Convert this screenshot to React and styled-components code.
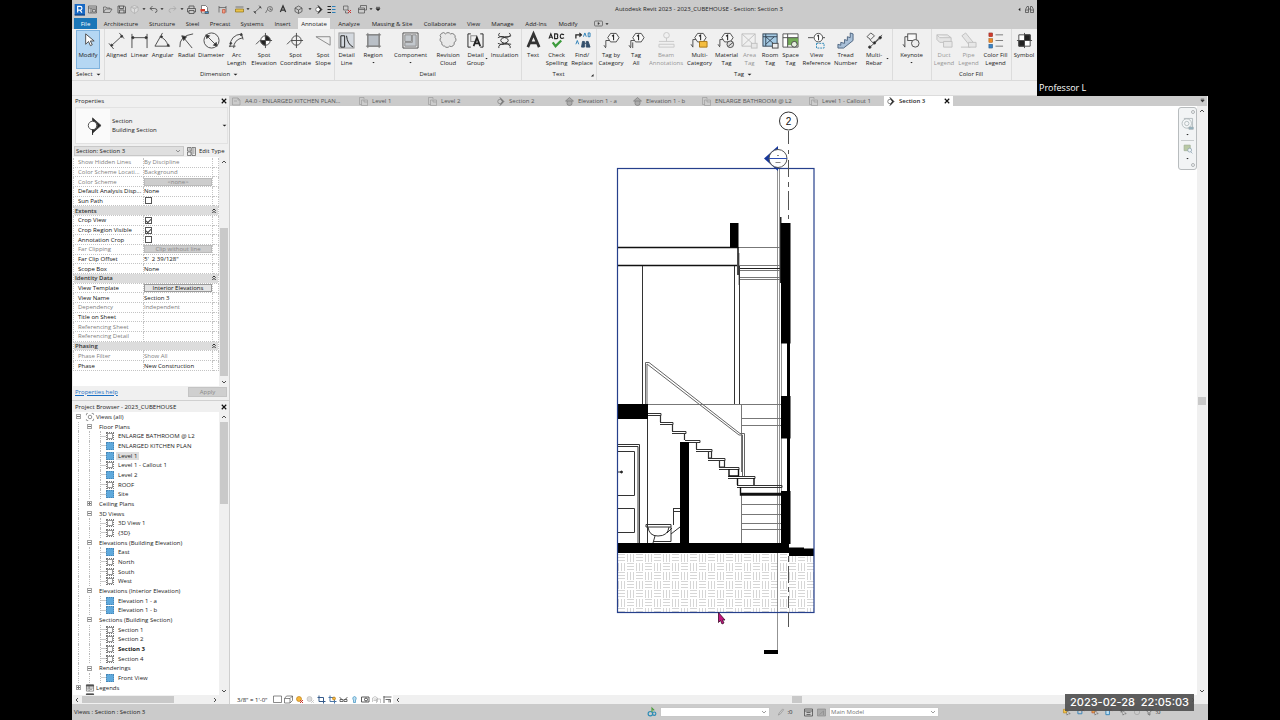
import React from "react";
import styled, { createGlobalStyle, css } from "styled-components";

const Global = createGlobalStyle`
  * { box-sizing: border-box; }
  body { margin: 0; background: #000; }
  button, input, select { font: inherit; color: inherit; margin: 0; padding: 0; border: 0; background: none; border-radius: 0; }
  body, button, input, select { font-family: "Open Sans", "Noto Sans", sans-serif; }
`;

/* ---------- icons ---------- */
const G = "#4a4a4a";
const one = (x, y) => (
  <g>
    <path d={`M${x - 3} ${y - 4.5}h6l3 4.5l-3 4.5h-6l-3 -4.5z`} fill="#f8f8f8" />
    <path d={`M${x - 1.5} ${y - 1.5}l1.7 -1.3v5.6`} stroke="#222" strokeWidth="1.1" />
  </g>
);
const icons = {
  modify: <path d="M6 2v11l3-3l2 4.500l2-1l-2-4h4z" fill="#fff" />,
  aligned: <g><path d="M3 15L15 4M1 12l5 6M12 1l5 6" /><circle cx="4" cy="14" r="1.100" fill="#222" /><circle cx="14.500" cy="4.500" r="1.100" fill="#222" /></g>,
  linear: <g><path d="M1 2v15M17 2v15M1 6h16" /><circle cx="2" cy="6" r="1.200" fill="#222" /><circle cx="16" cy="6" r="1.200" fill="#222" /></g>,
  angular: <g><path d="M9 1L1 15h16M6 5q7 2 9 10" /><circle cx="8" cy="5" r="1" fill="#222" /><circle cx="15" cy="14" r="1" fill="#222" /></g>,
  radial: <g><path d="M2 16Q1 4 16 2M6 6l9 11" /><path d="M4 4l5 1l-3 4z" fill="#222" /></g>,
  diameter: <g><circle cx="9" cy="9" r="8" /><path d="M4 4l10 10" /><path d="M3 3l4 1l-3 3zM15 15l-4-1l3-3z" fill="#222" /></g>,
  arc: <g><path d="M2 16Q2 3 15 2M6 17q0-9 10-11M1 15h7M14 1l2 7" /><circle cx="3" cy="12" r="1" fill="#222" /><circle cx="14" cy="3" r="1" fill="#222" /></g>,
  spotElev: <g><circle cx="10" cy="9" r="5" fill="#fff" /><path d="M10 4a5 5 0 0 1 5 5h-5zM10 14a5 5 0 0 1-5-5h5z" fill="#222" /><path d="M0 13l4-4h13M10 1v16" /></g>,
  spotCoord: <g><circle cx="10" cy="9" r="5" /><path d="M0 13l4-4h13M10 1v16" /></g>,
  slope: <path d="M1 5h15v9z" stroke="#888" />,
  detailLine: <g><rect x="1" y="1" width="16" height="16" fill="#d4d9df" stroke="#999" /><path d="M3 4h4v12H3zM9 4q1 9 7 12" stroke="#222" /></g>,
  region: <g><rect x="3" y="3" width="12" height="12" fill="#b9bfc6" stroke="#888" /><path d="M3 1v16M15 1v16M1 3h16M1 15h16" stroke="#777" /></g>,
  component: <g><path d="M1 1h16v16H1z" fill="#f2f2f2" /><path d="M3 3h7v7H3zM11 3h4v12H3v-4h8z" fill="#c3c8cd" stroke="#888" /></g>,
  cloud: <path d="M6 2a3 3 0 0 1 5 0a3.500 3.500 0 0 1 5 4a3 3 0 0 1-1 5a3.500 3.500 0 0 1-5 4a3 3 0 0 1-5 0a3 3 0 0 1-3-4a3 3 0 0 1-1-5a3 3 0 0 1 5-4z" fill="#e8e8e8" stroke="#777" />,
  group: <g><path d="M4 2H1v14h3M14 2h3v14h-3" stroke="#222" /><rect x="4" y="4" width="6" height="6" stroke="#888" /><path d="M7 15l3.500-9l3.500 9M8 12h5" stroke="#222" strokeWidth="1.800" /></g>,
  insulation: <g stroke="#333"><path d="M4 1q-3 3 1 4q8 1 8 4q0 2-4 3q-7 1-6 5" /><path d="M14 1q3 3-1 4q-8 1-8 4q0 2 4 3q7 1 6 5" /><path d="M2 6q3-2 7-1t7-1M2 12q4 2 7 1t7 0" /></g>,
  textA: <path d="M3 16L9 2l6 14M5 11.500h8" stroke="#333" strokeWidth="2.800" />,
  check: <g><path d="M1 7l2-5l2 5M2 5.500h2M7 2v5h2q2 0 1-2.500q1-2.500-1-2.500zM17 3q-4-2-4 1.500t4 1.500" stroke="#222" strokeWidth="1.200" /><path d="M5 11l3 4l6-6" stroke="#3c9b3c" strokeWidth="2.400" /></g>,
  find: <g><path d="M2 7V3h5" stroke="#222" strokeWidth="1.300" /><path d="M6 1l2.500 2l-2.500 2z" fill="#222" /><path d="M10 5l1.500-4l1.500 4M15 1v4h2V1zM2 13l1.500-4l1.500 4" stroke="#2a7fb8" /><path d="M8 16l1-6h2v6zM13 16v-6h2l2 6zM11 12h2" fill="#35506b" stroke="#35506b" /></g>,
  tagCat: <g><path d="M3 16V9h5M1 14l2 3" />{one(11, 6)}</g>,
  tagAll: <g><path d="M3 16V9h5M5 17V11M1 14l2 3" />{one(11, 6)}</g>,
  beam: <g stroke="#999"><path d="M1 10h16M1 13h16v3H1z" /><circle cx="9" cy="3.500" r="3" /><path d="M9 6v4" /></g>,
  multiCat: <g><path d="M2 16V8h5M0 13l2 3" />{one(10, 6)}<path d="M9 10h8v6H9z" fill="#f4bd3f" stroke="#a97612" /></g>,
  material: <g><path d="M2 15V8h5M0 13l2 3" />{one(10, 6)}<circle cx="13" cy="13" r="3.500" fill="#ddd" /><path d="M11 15l5-4" /></g>,
  area: <g stroke="#888"><path d="M1 2h14v13H1zM1 2l14 13M15 2L1 15" /><rect x="11" y="12" width="6" height="5" fill="#ddd" /></g>,
  room: <g><rect x="1" y="2" width="15" height="13" fill="#a6cbe4" stroke="#345" /><path d="M1 5h15M4 5l9 8M13 5l-9 8M4 2v13" stroke="#345" /><rect x="11" y="12" width="6" height="5" fill="#eee" /></g>,
  space: <g><path d="M1 2h16v14H1z" fill="#fff" stroke="#555" /><path d="M6 6h11v8H6z" fill="#74ac58" stroke="none" /><path d="M1 6h16M6 2v14" /><circle cx="13" cy="13" r="3" fill="#e6f0e0" /></g>,
  viewRef: <g><path d="M0 6h6M15 6h3" /><circle cx="11" cy="6" r="4.500" fill="#fff" /><path d="M9.500 4.500l1.700-1.300v5.600" stroke="#222" /><path d="M9 12h8v5H9z" stroke="#2d88b9" strokeDasharray="2 1" /></g>,
  tread: <path d="M1 13v4h6l10-8V2l-3-1v5l-3-1v4l-3-1v4l-4-1v3z" fill="#a9c0d8" stroke="#4c6480" />,
  rebar: <g><path d="M1 5l4-4l4 3l-4 4zM4 8l4 4l9-9M4 16l13-11" stroke="#555" /><circle cx="4" cy="16" r="1.300" fill="#222" /><circle cx="9" cy="11.500" r="1.300" fill="#222" /><circle cx="15" cy="6" r="1.300" fill="#222" /></g>,
  keynote: <g><path d="M2 16V5h5M0 13l2 3" /><rect x="5" y="2" width="9" height="7" fill="#fafafa" /><circle cx="13" cy="12" r="4" fill="#eee" /></g>,
  duct: <g stroke="#888"><path d="M1 3h11l4 3v5H4l-3-3zM1 3l3 3h12" fill="#d8d8d8" /><path d="M8 10h9v6H8z" fill="#ddd" /></g>,
  pipe: <g stroke="#888"><path d="M2 4l4-3l8 10l-4 3zM1 16h10" fill="#d8d8d8" /><path d="M9 11h8v5H9z" fill="#ddd" /></g>,
  colorFill: <g><rect x="2" y="1" width="4" height="4" fill="#cf3b2d" stroke="#8a2a20" strokeWidth=".5" /><rect x="2" y="7" width="4" height="4" fill="#ef8a26" stroke="#955010" strokeWidth=".5" /><rect x="2" y="13" width="4" height="4" fill="#3a82c4" stroke="#25527c" strokeWidth=".5" /><path d="M9 3h8M9 9h8M9 15h8" stroke="#777" /></g>,
  symbol: <g><path d="M3 3h12v12H3z" fill="#fff" /><path d="M9 3h6v6H9zM3 9h6v6H3z" fill="#222" /><path d="M9 1v16M1 9h16" /></g>,

  revit: <g><rect x="1" y="0" width="17" height="18" fill="#1768c4" stroke="none" /><path d="M6 14V4h4q3 0 3 3t-3 3H6M10 10l3 4" stroke="#fff" strokeWidth="2" /><path d="M1 18h17" stroke="#0b3f80" strokeWidth="2" /></g>,
  home: <path d="M1 2h16v14H1zM1 6h16M6 6v10M9 9h6v5H9z" />,
  open: <path d="M1 15V4h5l2 2h6v2M1 15l4-7h13l-4 7z" />,
  save: <path d="M2 2h13l2 2v12H2zM5 2v5h8V2M5 16v-6h9v6" strokeWidth="1.600" />,
  sync: <path d="M9 1l7 3v8l-7 5l-7-5V4zM2 4l7 4l7-4M9 8v9" stroke="#aaa" fill="#ddd" />,
  undo: <path d="M7 2L2 7l5 4M2 7h9q5 0 5 4t-4 4" strokeWidth="1.600" />,
  redo: <path d="M11 2l5 5l-5 4M16 7H7q-5 0-5 4t4 4" stroke="#aaa" strokeWidth="1.600" />,
  print: <path d="M4 7V2h10v5M4 14H1V7h16v7h-3M4 11h10v6H4z" strokeWidth="1.600" />,
  pdf: <g><path d="M3 1h8l4 4v11H3z" fill="#fff" /><path d="M1 8h9v5H1z" fill="#d33c2d" stroke="none" /><path d="M10 13h7v4h-7z" fill="#468fcb" /></g>,
  measure: <g><path d="M2 2v13M16 2v13M2 5h14" /><path d="M9 9h5v7H9z" fill="#f0a28b" stroke="#c0492b" /></g>,
  ruler: <g><path d="M1 4h16" /><path d="M1 8h16v6H1z" fill="#e9c24b" stroke="#8a6c10" /></g>,
  tagQ: <path d="M1 16l4-7M5 9a5 5 0 1 1 5 4zM10 5v4h3" />,
  cube: <path d="M9 2l7 4v7l-7 4l-7-4V6zM2 6l7 4l7-4M9 10v7" strokeWidth="1.500" />,
  section: <g><circle cx="8" cy="9" r="4.500" fill="#fff" /><path d="M8 1l8 8l-8 8l5-8z" fill="#222" stroke="#222" /></g>,
  thin: <g><path d="M1 3h7M1 9h7M1 15h7" strokeWidth="2.400" stroke="#222" /><path d="M10 3h7M10 9h7M10 15h7" stroke="#2d7fb8" strokeWidth="2" /></g>,
  closeWin: <g><path d="M1 2h9v8H1zM5 12v4h6" /><path d="M10 10l6 6M16 10l-6 6" stroke="#c33" strokeWidth="2" /></g>,
  switchWin: <path d="M5 5V1h12v9h-3M1 6h12v10H1zM1 9h12" strokeWidth="1.400" />,
  binoc: <path d="M1 15V9l3-6h3v12zM11 15V3h3l3 6v6zM7 8h4M1 10h6M11 10h6" strokeWidth="1.500" />,
  play: <g><rect x="1" y="4" width="16" height="10" rx="2" /><path d="M8 7l3 2l-3 2z" fill="#222" /></g>,

  sheet: <path d="M1 2h11l4 4v10H1zM4 8h6M12 2v4h4" stroke="#999" />,
  plan: <path d="M1 1h9v3M1 1v14h4M5 6h12v11H5zM10 6v4h7" stroke="#999" />,
  sectionTab: <g stroke="#777"><circle cx="8" cy="9" r="4.500" /><path d="M8 1l8 8l-8 8l5-8z" fill="#777" /></g>,
  elevTab: <path d="M1 8l8-7l8 7zM4 8v5a5 4 0 0 0 10 0V8" stroke="#777" fill="#aaa" />,

  thumb: <g><circle cx="8" cy="9" r="4.500" fill="#fff" /><path d="M8 1l9 8l-9 8V14q5-1 5-5t-5-5z" fill="#222" /><path d="M8 13v6" stroke="#222" /></g>,
  editType: <path d="M1 1h7v7H1zM10 1h7v16h-7zM1 10h7v7H1zM12 4h3M12 8h3M12 12h3M3 4h3" />,
  views: <g><circle cx="9" cy="9" r="4" /><path d="M1 5V1h4M13 1h4v4M17 13v4h-4M5 17H1v-4" strokeDasharray="3 1" /></g>,
  legend: <g><path d="M1 2h16v14H1z" fill="#fff" /><path d="M1 2h16v3H1z" fill="#555" /><path d="M1 9h16M7 5v11M3 12h2M9 12h5" /></g>,

  scaleBox: <path d="M1 2h16v13H1z" />,
  visual: <path d="M1 7h11v9H1zM1 7l4-5h12v9l-5 5M12 7l5-5" />,
  sun: <g><circle cx="8" cy="8" r="5" fill="#f6b73c" stroke="#b97a10" /><path d="M10 10l6 6M16 10l-6 6" stroke="#c33" strokeWidth="2" /></g>,
  shadow: <g stroke="#bbb"><circle cx="7" cy="8" r="5" fill="#ddd" /><path d="M10 10l6 6M16 10l-6 6" /></g>,
  crop: <g><path d="M4 1v12h13M1 5h12v12" stroke="#345a8a" strokeWidth="2" /></g>,
  crop2: <g><path d="M4 1v12h13M1 5h12v12" stroke="#4a76a8" strokeWidth="2" /><circle cx="12" cy="7" r="3" fill="#f2b540" stroke="#b97a10" /></g>,
  glasses: <path d="M1 5q3 0 4 4M17 5q-3 0-4 4M2 9h6v4H2zM10 9h6v4h-6z" strokeWidth="1.600" />,
  bulb: <path d="M9 3a4 4 0 0 1 2 7v5H7v-5a4 4 0 0 1 2-7z" stroke="#2d88b9" fill="#bfe0f2" />,
  cam: <g><path d="M1 4h15v10H1z" strokeWidth="1.800" /><circle cx="10" cy="9" r="3" strokeWidth="2" /></g>,
  pad: <path d="M1 14V6l5-3l5 3v8M9 16V8h8v8M3 8h6M3 11h6" stroke="#aaa" />,
  constraint: <path d="M2 2v14M1 4h16M5 9h10v6M12 9v6" strokeWidth="1.600" />,
  design: <path d="M1 2h16v14H1zM1 6h16M5 9h8M5 13h8" strokeWidth="1.500" />,
  design2: <path d="M1 2h16v14H1zM5 13l8-7v8" stroke="#888" fill="#aaa" />,
  worker: <g><circle cx="6" cy="12" r="4" stroke="#2a8bb5" strokeWidth="2" /><circle cx="13" cy="12" r="3" stroke="#2a8bb5" strokeWidth="2" /><path d="M9 9V2l4 4" stroke="#4a9c3a" strokeWidth="2" /></g>,
  pencil: <path d="M3 16l2-5l8-9l2 2l-7 9z" stroke="#888" />,
  filter: <path d="M1 3h16l-6 7v6l-4-2v-4z" strokeWidth="1.400" />,
  selYellow: <g><path d="M1 3h9v8H1z" fill="#f3c34a" stroke="#b08010" /><path d="M9 6v10l3-3h4z" fill="#fff" /></g>,
  selBlue: <g><path d="M2 5h9v8H2z" stroke="#2d7fb8" strokeWidth="2" /><path d="M11 2l5 5M16 2l-5 5" stroke="#c33" strokeWidth="2" /></g>,
  selRed: <g><path d="M2 3h9v8H2z" fill="#e9a04a" stroke="#b44a2a" /><path d="M9 6v10l3-3h4z" fill="#fff" /></g>,
  selFace: <g><path d="M2 3h8v12H2z" stroke="#2d7fb8" strokeWidth="2" fill="#bfe0f2" /><path d="M11 1l5 5M16 1l-5 5" stroke="#c33" strokeWidth="2" /></g>,
  selDrag: <g><path d="M5 1v9M1 5h9" stroke="#222" strokeWidth="1.600" /><path d="M9 6v10l3-3h4z" fill="#fff" /></g>,
  ring: <circle cx="9" cy="9" r="6" stroke="#aaa" strokeWidth="2" />,
  chevron: <path d="M3 6l6 6l6-6" strokeWidth="1.600" />,
  caret: <path d="M2 6h14l-7 7z" fill="#222" stroke="none" />,
  launch: <path d="M16 4v12H4z" fill="#222" stroke="none" />,
  back: <path d="M12 3v12L5 9z" fill="#222" stroke="none" />,
  cross: <path d="M4 4l10 10M14 4L4 14" stroke="#111" strokeWidth="2.600" />,
  up: <path d="M3 12l6-6l6 6" stroke="#333" strokeWidth="2.600" />,
  down: <path d="M3 6l6 6l6-6" stroke="#333" strokeWidth="2.600" />,
  left: <path d="M12 3L6 9l6 6" stroke="#333" strokeWidth="2.600" />,
  right: <path d="M6 3l6 6l-6 6" stroke="#333" strokeWidth="2.600" />,
  fold: <path d="M4 8l5-5l5 5M4 15l5-5l5 5" stroke="#111" strokeWidth="2.600" />,
  listMenu: <path d="M3 4h12M3 8h12l-6 6z" fill="#222" stroke="#222" strokeWidth="2" />,
  wheel: <g stroke="#a3adb0"><path d="M4 2h12v13H9" fill="#eef2f3" /><circle cx="8" cy="9" r="6.500" fill="#f4f6f7" /><circle cx="8" cy="9" r="3" /><path d="M11 14h6v3h-6z" fill="#8fb0c0" /></g>,
  zoomArea: <g stroke="#9fae94"><path d="M2 2h11v10H2z" fill="#b9c9a4" /><circle cx="12" cy="11" r="3.500" fill="#eef3f5" stroke="#8aa0b0" /><path d="M14 14l3 3" stroke="#8aa0b0" /></g>,
};
const Svg = styled.svg`
  display: block;
  flex: none;
  overflow: visible;
`;
const Icon = ({ n, s = 10 }) => (
  <Svg width={s} height={s} viewBox="0 0 18 18" fill="none" stroke={G} strokeWidth={s > 12 ? 1 : 1.3} aria-hidden="true">{icons[n]}</Svg>
);

/* ---------- window ---------- */
const Screen = styled.main`
  position: relative;
  height: 100vh;
  padding: 0 72px;
  background: #000;
  color: #222;
  font-size: 6px;
  line-height: 8px;
`;
const Window = styled.div`
  height: 100%;
  display: flex;
  flex-direction: column;
  overflow: hidden;
  background: #f0f0f0;
`;
const TitleBar = styled.header`
  display: flex;
  flex: none;
  align-items: center;
  height: 18px;
  padding: 0 172px 0 1px;
  background: #cbcbcb;
`;
const QuickButton = styled.button`
  display: grid;
  place-items: center;
  flex: none;
  width: ${(p) => p.$w}px;
  height: 18px;
`;
const Title = styled.h1`
  flex: 1;
  margin: 0;
  font-size: 6px;
  font-weight: 400;
  text-align: center;
  white-space: nowrap;
`;
const RibbonTabs = styled.nav`
  display: flex;
  flex: none;
  height: 11px;
  background: #cbcbcb;
  padding-left: 2px;
`;
const FileTab = styled.button`
  width: 23px;
  margin-right: 1px;
  background: #1a76b8;
  color: #fff;
`;
const RibbonTab = styled.button`
  flex: none;
  width: ${(p) => p.$w - 4}px;
  margin: 0 2px;
  white-space: nowrap;
  background: ${(p) => (p.$on ? "#f3f3f3" : "none")};
`;
const RibbonState = styled.button`
  display: flex;
  align-items: center;
  justify-content: center;
  gap: 2px;
  width: 34px;
`;
const Ribbon = styled.div`
  display: flex;
  flex: none;
  height: 52px;
  background: #f0f0f0;
  border-bottom: 1px solid #dadada;
`;
const Panel = styled.section`
  position: relative;
  flex: none;
  display: flex;
  flex-direction: column;
  justify-content: space-between;
  padding: 1px ${(p) => p.$pr || 0}px 1px ${(p) => p.$pl || 0}px;
  border-right: 1px solid #dcdcdc;
`;
const Tools = styled.div`
  display: flex;
`;
const Tool = styled.button`
  position: relative;
  display: flex;
  flex-direction: column;
  align-items: center;
  gap: 2px;
  width: ${(p) => p.$w}px;
  height: 39px;
  padding-top: 2px;
  white-space: pre;
  opacity: ${(p) => (p.disabled ? 0.45 : 1)};
  ${(p) => p.$on && css`
    background: #b5d7f3;
    outline: 1px solid #7fb2dd;
    outline-offset: -1px;
  `}
`;
const SideCaret = styled.span`
  position: absolute;
  right: 1px;
  bottom: 9px;
`;
const Launcher = styled.button`
  position: absolute;
  right: 2px;
  bottom: 3px;
`;
const PanelTitle = styled.h2`
  display: flex;
  align-items: center;
  justify-content: center;
  gap: 3px;
  margin: 0;
  height: 10px;
  font-size: 6px;
  font-weight: 400;
`;
const Options = styled.div`
  height: 14px;
  flex: none;
  background: #f0f0f0;
`;
const Body = styled.div`
  flex: 1;
  min-height: 0;
  display: flex;
  border-top: 1px solid #dcdcdc;
`;

/* ---------- palettes ---------- */
const Side = styled.aside`
  flex: none;
  width: 158px;
  display: flex;
  flex-direction: column;
  border-right: 1px solid #cfcfcf;
  background: #f0f0f0;
`;
const PaletteHead = styled.div`
  display: flex;
  flex: none;
  align-items: center;
  justify-content: space-between;
  height: 10px;
  padding: 0 1px 0 3px;
`;
const PaletteTitle = styled.h2`
  margin: 0;
  font-size: 6px;
  font-weight: 400;
`;
const IconButton = styled.button`
  display: grid;
  place-items: center;
  width: 9px;
  height: 9px;
`;
const TypeSelector = styled.button`
  display: flex;
  flex: none;
  align-items: center;
  gap: 2px;
  height: 37px;
  margin: 1px 1px 1px 3px;
  border: 1px solid #e2e2e2;
  text-align: left;
  line-height: 9px;
`;
const Thumb = styled.span`
  display: grid;
  place-items: center;
  width: 34px;
  height: 34px;
  background: #fafafa;
`;
const Grow = styled.span`
  flex: 1;
`;
const TypeRow = styled.div`
  display: flex;
  flex: none;
  align-items: center;
  gap: 3px;
  height: 12px;
  padding-left: 2px;
`;
const SelectBox = styled.label`
  position: relative;
  display: flex;
  align-items: center;
  justify-content: flex-end;
  width: ${(p) => p.$w}px;
  height: 10px;
  padding-right: 2px;
  background: ${(p) => p.$bg};
  border: 1px solid #c8c8c8;
  color: ${(p) => p.$fg || "#222"};
`;
const Select = styled.select`
  appearance: none;
  position: absolute;
  inset: 0;
  width: 100%;
  padding-left: 1px;
`;
const EditType = styled.button`
  display: flex;
  align-items: center;
  gap: 3px;
  white-space: nowrap;
`;
const PropArea = styled.div`
  display: flex;
  flex: none;
  justify-content: space-between;
  height: 229px;
  background: #fff;
  margin-left: 1px;
`;
const PropTable = styled.table`
  width: 145px;
  height: 213px;
  margin-top: 1px;
  table-layout: fixed;
  border-collapse: collapse;
  align-self: flex-start;
  td, th {
    padding: 0;
    border: 1px dotted #c4c4c4;
    border-top: 0;
    line-height: 8px;
    font-weight: 400;
    text-align: left;
    white-space: nowrap;
    overflow: hidden;
  }
  tbody th { padding-left: 4px; }
`;
const PropRow = styled.tr`
  color: ${(p) => (p.$dim ? "#808080" : "#111")};
`;
const GroupRow = styled.tr`
  background: #dcdcdc;
  color: #111;
  && th { padding-left: 1px; font-weight: 600; color: #333; }
`;
const GroupLine = styled.span`
  display: flex;
  align-items: center;
  justify-content: space-between;
  padding-right: 1px;
`;
const ValueButton = styled.button`
  display: block;
  width: 100%;
  height: 8px;
  line-height: 6px;
  border: 1px solid ${(p) => (p.disabled ? "#bbb" : "#999")};
  background: ${(p) => (p.disabled ? "#cdcdcd" : "#e4e4e4")};
  color: ${(p) => (p.disabled ? "#888" : "#111")};
`;
const ValueInput = styled.input`
  display: block;
  width: 100%;
  height: 8px;
`;
const Tick = styled.input`
  appearance: none;
  display: grid;
  place-items: center;
  width: 7px;
  height: 7px;
  margin-left: 1px;
  border: 1px solid #555;
  background: #fff;
  &:checked::after {
    content: "";
    width: 4px;
    height: 2px;
    border-left: 1px solid #444;
    border-bottom: 1px solid #444;
    transform: rotate(-45deg);
  }
`;
const PropFoot = styled.div`
  display: flex;
  flex: none;
  align-items: center;
  justify-content: space-between;
  height: 15px;
  padding: 0 2px 3px 3px;
  border-bottom: 1px solid #d0d0d0;
  margin-bottom: 1px;
`;
const HelpLink = styled.a`
  color: #1a6fc4;
`;
const Apply = styled.button`
  width: 39px;
  height: 10px;
  background: #cfcfcf;
  border: 1px solid #c4c4c4;
  color: #8a8a8a;
`;
const TreeArea = styled.div`
  flex: 1;
  min-height: 0;
  display: flex;
  background: #fff;
  margin-left: 1px;
`;
const TreeClip = styled.div`
  flex: 1;
  overflow: hidden;
`;
const Tree = styled.ul`
  display: flex;
  flex-direction: column;
  height: 290px;
  margin: 0;
  padding: 0;
  list-style: none;
`;
const TreeRow = styled.li`
  flex: 1;
  display: flex;
  align-items: center;
  white-space: nowrap;
  color: #222;
  font-weight: ${(p) => (p.$bold ? 700 : 400)};
`;
const Guide = styled.span`
  align-self: stretch;
  width: 11px;
  padding-left: 5px;
  &::before { content: ""; display: block; height: 100%; border-left: 1px dotted #bbb; }
  ${(p) => p.$leaf && css`
    background: linear-gradient(#ccc, #ccc) 100% 50% / 5px 1px no-repeat;
  `}
`;
const Fold = styled.button`
  display: grid;
  place-items: center;
  width: 5px;
  height: 5px;
  margin: 0 5px 0 3px;
  border: 1px solid #a5a5a5;
  position: relative;
  &::before { content: ""; position: absolute; width: 3px; height: 1px; background: #777; }
  &::after { content: ""; position: absolute; width: 1px; height: ${(p) => (p.$plus ? 3 : 0)}px; background: #777; }
`;
const ViewMark = styled.span`
  width: 8px;
  height: 8px;
  margin-right: 2px;
  border: 1px dotted ${(p) => (p.$on ? "#4a86b4" : "#777")};
  background: ${(p) => (p.$on ? "#5fa9dc" : "#fff")};
  box-shadow: inset 0 0 0 1px ${(p) => (p.$on ? "#5fa9dc" : "#999")};
`;
const TreeLabel = styled.span`
  padding: 0 2px;
  background: ${(p) => (p.$sel ? "#dedede" : "none")};
`;

/* ---------- scroll bars ---------- */
const Bar = styled.div`
  flex: ${(p) => (p.$h ? "1" : "none")};
  display: flex;
  flex-direction: ${(p) => (p.$h ? "row" : "column")};
  ${(p) => (p.$h ? "height: 9px;" : "width: 10px;")}
  background: #f0f0f0;
  align-items: center;
`;
const Track = styled.div`
  flex: 1;
  align-self: stretch;
  display: flex;
  flex-direction: ${(p) => (p.$h ? "row" : "column")};
`;
const Space = styled.span`
  flex: ${(p) => p.$n};
`;
const Knob = styled.span`
  flex: ${(p) => p.$n};
  margin: ${(p) => (p.$h ? "1px 0" : "0 1px")};
  background: #c9c9c9;
`;
const Scroll = ({ h, a, k, b }) => (
  <Bar $h={h}>
    <IconButton aria-label={h ? "Scroll left" : "Scroll up"}><Icon n={h ? "left" : "up"} s={6} /></IconButton>
    <Track $h={h}><Space $n={a} /><Knob $h={h} $n={k} /><Space $n={b} /></Track>
    <IconButton aria-label={h ? "Scroll right" : "Scroll down"}><Icon n={h ? "right" : "down"} s={6} /></IconButton>
  </Bar>
);

/* ---------- document area ---------- */
const Docs = styled.section`
  flex: 1;
  min-width: 0;
  display: flex;
  flex-direction: column;
  border-right: 1px solid #f4f4f4;
`;
const DocTabs = styled.div`
  display: flex;
  flex: none;
  height: 10px;
  background: #cbcbcb;
`;
const DocTab = styled.button`
  display: flex;
  align-items: center;
  gap: 4px;
  flex: none;
  width: ${(p) => p.$w}px;
  padding: 0 2px;
  white-space: nowrap;
  text-align: left;
  color: ${(p) => (p.$on ? "#222" : "#555")};
  font-weight: ${(p) => (p.$on ? 600 : 400)};
  background: ${(p) => (p.$on ? "#fff" : "none")};
`;
const Canvas = styled.div`
  flex: 1;
  min-height: 0;
  display: flex;
  background: #fff;
`;
const Sheet = styled.div`
  position: relative;
  flex: 1;
  min-width: 0;
`;
const Drawing = styled.svg`
  display: block;
  width: 100%;
  height: 100%;
`;
const NavBar = styled.div`
  position: absolute;
  right: 0;
  top: 1px;
  width: 19px;
  height: 63px;
  display: flex;
  flex-direction: column;
  align-items: center;
  justify-content: space-between;
  padding: 2px 1px;
  border: 1px solid #b8bcbe;
  border-radius: 3px;
  background: #f2f4f5;
`;
const NavDot = styled.span`
  align-self: flex-end;
  width: 4px;
  height: 4px;
  border: 1px solid #b0b4b6;
  border-radius: 50%;
`;
const NavButton = styled.button`
  display: flex;
  flex-direction: column;
  align-items: center;
  gap: 3px;
`;
const NavRule = styled.span`
  width: 13px;
  height: 1px;
  background: #c8cccd;
`;
const ViewBar = styled.div`
  display: flex;
  flex: none;
  align-items: center;
  height: 9px;
  background: #f0f0f0;
`;
const ViewTools = styled.div`
  display: flex;
  align-items: center;
  height: 9px;
  padding-left: 7px;
  background: #fff;
`;
const Scale = styled.button`
  width: 35px;
  text-align: left;
  white-space: nowrap;
`;
const ViewTool = styled.button`
  display: grid;
  place-items: center;
  width: 11px;
`;
const Corner = styled.span`
  width: 10px;
`;

/* ---------- status bar and overlays ---------- */
const Status = styled.footer`
  display: flex;
  flex: none;
  align-items: center;
  height: 16px;
  padding: 0 46px 0 2px;
  background: #cbcbcb;
`;
const StatusText = styled.span`
  width: ${(p) => p.$w}px;
`;
const StatusItem = styled.span`
  display: flex;
  align-items: center;
  justify-content: center;
  gap: ${(p) => p.$gap || 2}px;
  width: ${(p) => p.$w}px;
  white-space: nowrap;
`;
const Camera = styled.div`
  position: absolute;
  top: 0;
  right: 0;
  width: 243px;
  height: 96px;
  display: flex;
  align-items: flex-end;
  padding: 0 2px 2px;
  background: #000;
  color: #fff;
  font: 9px/12px "Open Sans", sans-serif;
`;
const Clock = styled.time`
  position: absolute;
  right: 86px;
  bottom: 9px;
  width: 129px;
  height: 17px;
  background: rgba(80, 80, 80, 0.92);
  color: #fff;
  font: 500 11px/17px Inter, sans-serif;
  text-align: center;
  white-space: nowrap;
`;

const quick = [
  ["revit", 12], ["home", 15], ["open", 15], ["save", 12], ["sync", 14], ["caret", 6], ["undo", 12], ["caret", 6], ["redo", 14], ["caret", 6],
  ["print", 13], ["pdf", 12], ["measure", 24], ["ruler", 11], ["caret", 6], ["aligned", 12], ["tagQ", 13], ["textA", 14], ["cube", 17], ["caret", 5],
  ["section", 12], ["thin", 15], ["closeWin", 17], ["switchWin", 12], ["caret", 5], ["listMenu", 10],
];
const quickSize = { caret: 4, listMenu: 6, revit: 11, textA: 8 };
const tabs = [
  ["Architecture", 46], ["Structure", 36], ["Steel", 25], ["Precast", 30], ["Systems", 34], ["Insert", 27], ["Annotate", 36], ["Analyze", 34],
  ["Massing & Site", 52], ["Collaborate", 44], ["View", 23], ["Manage", 35], ["Add-Ins", 32], ["Modify", 32],
];
const panels = [
  { t: "Select", arrow: 1, pl: 4, pr: 3, tools: [["Modify", "modify", 24]] },
  { t: "Dimension", arrow: 1, tools: [["Aligned", "aligned", 24], ["Linear", "linear", 22], ["Angular", "angular", 24], ["Radial", "radial", 24], ["Diameter", "diameter", 25], ["Arc\nLength", "arc", 26], ["Spot\nElevation", "spotElev", 29], ["Spot\nCoordinate", "spotCoord", 34], ["Spot\nSlope", "slope", 21]] },
  { t: "Detail", tools: [["Detail\nLine", "detailLine", 24], ["Region", "region", 29, 1], ["Component", "component", 46, 1], ["Revision\nCloud", "cloud", 29], ["Detail\nGroup", "group", 26, 2], ["Insulation", "insulation", 32]] },
  { t: "Text", launch: 1, tools: [["Text", "textA", 23], ["Check\nSpelling", "check", 24], ["Find/\nReplace", "find", 27]] },
  { t: "Tag", arrow: 1, pr: 2, tools: [["Tag by\nCategory", "tagCat", 29], ["Tag\nAll", "tagAll", 21], ["Beam\nAnnotations", "beam", 39, 0, 1], ["Multi-\nCategory", "multiCat", 28], ["Material\nTag", "material", 26], ["Area\nTag", "area", 20, 0, 1], ["Room\nTag", "room", 21], ["Space\nTag", "space", 20], ["View\nReference", "viewRef", 32], ["Tread\nNumber", "tread", 26], ["Multi-\nRebar", "rebar", 31, 2]] },
  { t: "", tools: [["Keynote", "keynote", 38, 1]] },
  { t: "Color Fill", tools: [["Duct\nLegend", "duct", 25, 0, 1], ["Pipe\nLegend", "pipe", 24, 0, 1], ["Color Fill\nLegend", "colorFill", 30]] },
  { t: "", tools: [["Symbol", "symbol", 25]] },
];
const props = [
  ["Show Hidden Lines", "By Discipline", "dim"], ["Color Scheme Locati...", "Background", "dim"], ["Color Scheme", "<none>", "offbtn"],
  ["Default Analysis Disp...", "None"], ["Sun Path", false, "tick"], ["Extents"], ["Crop View", true, "tick"], ["Crop Region Visible", true, "tick"],
  ["Annotation Crop", false, "tick"], ["Far Clipping", "Clip without line", "offbtn"], ["Far Clip Offset", "5'  2 39/128\"", "input"], ["Scope Box", "None"],
  ["Identity Data"], ["View Template", "Interior Elevations", "btn"], ["View Name", "Section 3", "input"], ["Dependency", "Independent", "dim"],
  ["Title on Sheet", "", "input"], ["Referencing Sheet", "", "dim"], ["Referencing Detail", "", "dim"], ["Phasing"], ["Phase Filter", "Show All", "dim"], ["Phase", "New Construction"],
];
const tree = [
  [0, "Views (all)", "views"], [1, "Floor Plans"], [2, "ENLARGE BATHROOM @ L2", 0], [2, "ENLARGED KITCHEN PLAN", 1], [2, "Level 1", 1, "sel"], [2, "Level 1 - Callout 1", 0],
  [2, "Level 2", 1], [2, "ROOF", 0], [2, "Site", 1], [1, "Ceiling Plans", "plus"], [1, "3D Views"], [2, "3D View 1", 0], [2, "{3D}", 0],
  [1, "Elevations (Building Elevation)"], [2, "East", 1], [2, "North", 0], [2, "South", 0], [2, "West", 0], [1, "Elevations (Interior Elevation)"],
  [2, "Elevation 1 - a", 1], [2, "Elevation 1 - b", 1], [1, "Sections (Building Section)"], [2, "Section 1", 0], [2, "Section 2", 0], [2, "Section 3", 0, "bold"],
  [2, "Section 4", 0], [1, "Renderings"], [2, "Front View", 1], [0, "Legends", "legend"], [0, "Schedules/Quantities (all)", "legend"],
];
const docs = [
  ["A4.0 - ENLARGED KITCHEN PLAN...", "sheet", 127], ["Level 1", "plan", 69], ["Level 2", "plan", 68], ["Section 2", "sectionTab", 69], ["Elevation 1 - a", "elevTab", 68],
  ["Elevation 1 - b", "elevTab", 69], ["ENLARGE BATHROOM @ L2", "plan", 107], ["Level 1 - Callout 1", "plan", 77],
];

const PropValue = ({ id, v, kind }) => {
  if (kind === "tick") return <Tick id={id} type="checkbox" defaultChecked={v} />;
  if (kind === "input") return <ValueInput id={id} defaultValue={v} />;
  if (kind === "btn" || kind === "offbtn") return <ValueButton id={id} disabled={kind === "offbtn"}>{v}</ValueButton>;
  return v;
};

const Col = styled.col`
  width: ${(p) => p.$w}px;
`;
const Properties = () => (
  <PropTable>
    <colgroup><Col $w={70} /><Col $w={69} /><Col $w={6} /></colgroup>
    <tbody>
      {props.map(([name, v, kind], i) => v === undefined ? (
        <GroupRow key={i}><th colSpan={3}><GroupLine>{name}<Icon n="fold" s={6} /></GroupLine></th></GroupRow>
      ) : (
        <PropRow key={i} $dim={kind === "dim" || kind === "offbtn"}>
          <th scope="row">{kind && kind !== "dim" ? <label htmlFor={`p${i}`}>{name}</label> : name}</th>
          <td><PropValue id={`p${i}`} v={v} kind={kind} /></td>
          <td />
        </PropRow>
      ))}
    </tbody>
  </PropTable>
);

const Browser = () => (
  <Tree>
    {tree.map(([lvl, name, mark, state]) => (
      <TreeRow key={name} $bold={state === "bold"}>
        {lvl > 0 && <Guide />}
        {lvl < 2 && <Fold $plus={mark === "plus" || mark === "legend"} aria-label={name} />}
        {lvl === 2 && <><Guide /><Guide $leaf /></>}
        {(mark === "views" || mark === "legend") && <Icon n={mark} s={8} />}
        {lvl === 2 && <ViewMark $on={mark === 1} />}
        <TreeLabel $sel={state === "sel"}>{name}</TreeLabel>
      </TreeRow>
    ))}
  </Tree>
);

const treads = [[648, 661, 413], [660, 673, 422], [672, 686, 431], [685, 700, 440], [696, 712, 449], [708, 725, 458], [719, 739, 467], [728, 755, 476], [737, 782, 485]];

const SectionView = () => (
  <Drawing viewBox="230 106 967 589" fill="none" stroke="#333" strokeWidth="1" role="img" aria-label="Section 3">
    <defs>
      <pattern id="earth" width="18" height="18" patternUnits="userSpaceOnUse" x="617" y="553">
        <path d="M1 1.500h7M1 4.500h7M1 7.500h7M10 10.500h7M10 13.500h7M10 16.500h7M10.500 1v8M13.500 1v8M16.500 1v8M1.500 10v8M4.500 10v8M7.500 10v8" stroke="#d6d6d6" />
      </pattern>
    </defs>
    <rect x="617" y="553" width="197" height="59" fill="url(#earth)" stroke="none" />
    <g stroke="#777">
      <path d="M777.500 169V653M779.500 169V543M781.500 217V543" strokeWidth=".8" />
      <path d="M738 247.500H781M739 265.500H780M739 270.500H780M739 277.500H780M739 279.500H780M741 418.500H781M741 425.500H781M741 504.500H781M741 514.500H781M741 523.500H781M741 529.500H781" />
      <path d="M739 253V285M741.500 404V472M741.500 495V543M647 404.500H782" />
    </g>
    <path d="M739 268.500H780M780.500 217V283" stroke="#222" />
    <path d="M617 247.500H738M617 265.500H737" stroke="#111" strokeWidth="1.300" />
    <path d="M738 247V275" stroke="#111" strokeWidth="1.500" />
    <path d="M642.500 266V404M734.500 266V404M739.500 266V404" />
    <path d="M645.500 404V362.500H649L740 433.500H744.500V476M647 404V364L739 435H742.500V476" stroke="#666" />
    <path d="M647.500 419V543" />
    {treads.map(([a, b, y]) => <path key={y} d={`M${a} ${y + 0.5}H${b}V${y + 2.500}H${a}`} />)}
    <path d="M660.500 415V422M672.500 424V431M684.500 433V440M696.500 442V449M708.500 451V458H711.500V451M719.500 460V467H724.500V460" strokeWidth="1.200" />
    <path d="M729 469V476H738.500V469M737.500 478V485M754 478V485M740.500 487V495H781M740 493.500H781" stroke="#111" strokeWidth="1.400" />
    <path d="M617 444.500H639.500V543M617 446.500H638V543M617 451.500H634.500V495.500H617M617 508.500H634.500V532.500H617M617 472H622" />
    <circle cx="621.500" cy="472" r="1" fill="#111" />
    <path d="M646 524.500H671V527H646ZM648 527Q649 536 658 536Q668 536 669 527M655 536L653 543M667 533L672 528M653 541.500H671V527M671 534L680 527M673 508.500H680M673 511.500H680M673.500 508V525" />
    <g fill="#000" stroke="none">
      <path d="M730 223H738.500V247.500H730ZM781 223H790.500V343.500H781ZM781 396H790.500V438.500H781ZM781 491H790.500V544H781ZM787 343H790V396H787ZM787 438H790V491H787Z" />
      <path d="M617 404H648V419H617ZM680 442H689V543H680ZM617 543H789V553H617ZM789 547.500H804V548.500H814V556H789ZM764 650H778V654H764Z" />
    </g>
    <rect x="617.500" y="168.500" width="196.500" height="444" stroke="#26408c" strokeWidth="1.200" />
    <path d="M788.500 131V144M788.500 150V154M788.500 160V177M788.500 182V187M788.500 191V210M788.500 215V219M788.500 556V562M788.500 566V583M788.500 587V592M788.500 596V608M788.500 612V627" stroke="#555" />
    <circle cx="788.500" cy="121" r="9" fill="#fff" />
    <text x="788.500" y="124.500" fontSize="10" textAnchor="middle" fill="#111" stroke="none" fontFamily="Liberation Sans, sans-serif">2</text>
    <path d="M764 158.500L778 146V171Z" fill="#16379c" stroke="none" />
    <circle cx="778" cy="158.500" r="9" fill="#fff" stroke="#555" />
    <path d="M769 158.500H787" stroke="#2d4fb5" />
    <path d="M777 155.500H779M775.500 162.500H780.500" stroke="#888" />
    <path d="M718.500 612.500V622.500L720.500 620.500L722 624L724 623L722.500 620H725Z" fill="#c4157f" stroke="#3b0a28" strokeWidth=".8" />
  </Drawing>
);

export default function App() {
  return (
    <Screen>
      <Global />
      <Window>
        <TitleBar>
          {quick.map(([n, w], i) => <QuickButton key={i} $w={w} aria-label={n}><Icon n={n} s={quickSize[n] || 9} /></QuickButton>)}
          <Title>Autodesk Revit 2023 - 2023_CUBEHOUSE - Section: Section 3</Title>
          <QuickButton $w={8} aria-label="Collapse search"><Icon n="back" s={5} /></QuickButton>
          <QuickButton $w={13} aria-label="Search"><Icon n="binoc" s={9} /></QuickButton>
        </TitleBar>
        <RibbonTabs>
          <FileTab>File</FileTab>
          {tabs.map(([t, w]) => <RibbonTab key={t} $w={w} $on={t === "Annotate"}>{t}</RibbonTab>)}
          <RibbonState aria-label="Ribbon state"><Icon n="play" s={9} /><Icon n="caret" s={4} /></RibbonState>
        </RibbonTabs>
        <Ribbon>
          {panels.map((p, i) => (
            <Panel key={i} $pl={p.pl} $pr={p.pr}>
              <Tools>
                {p.tools.map(([label, icon, w, arrow, off]) => (
                  <Tool key={label} $w={w} $on={icon === "modify"} disabled={!!off}>
                    <Icon n={icon} s={17} />
                    <span>{label}</span>
                    {arrow === 1 && <Icon n="caret" s={3} />}
                    {arrow === 2 && <SideCaret><Icon n="caret" s={3} /></SideCaret>}
                  </Tool>
                ))}
              </Tools>
              <PanelTitle>{p.t}{p.arrow && <Icon n="caret" s={5} />}</PanelTitle>
              {p.launch && <Launcher aria-label="Text types"><Icon n="launch" s={4} /></Launcher>}
            </Panel>
          ))}
        </Ribbon>
        <Options />
        <Body>
          <Side>
            <PaletteHead><PaletteTitle>Properties</PaletteTitle><IconButton aria-label="Close properties"><Icon n="cross" s={8} /></IconButton></PaletteHead>
            <TypeSelector>
              <Thumb><Icon n="thumb" s={17} /></Thumb>
              <span>Section<br />Building Section</span>
              <Grow />
              <Icon n="caret" s={5} />
            </TypeSelector>
            <TypeRow>
              <SelectBox $w={110} $bg="#dfdfdf">
                <Select aria-label="Element"><option>Section: Section 3</option></Select>
                <Icon n="chevron" s={6} />
              </SelectBox>
              <EditType><Icon n="editType" s={9} />Edit Type</EditType>
            </TypeRow>
            <PropArea><Properties /><Scroll a={60} k={144} b={1} /></PropArea>
            <PropFoot><HelpLink href="#help">Properties help</HelpLink><Apply disabled>Apply</Apply></PropFoot>
            <PaletteHead><PaletteTitle>Project Browser - 2023_CUBEHOUSE</PaletteTitle><IconButton aria-label="Close browser"><Icon n="cross" s={8} /></IconButton></PaletteHead>
            <TreeArea><TreeClip><Browser /></TreeClip><Scroll a={1} k={83} b={183} /></TreeArea>
            <ViewBar><Scroll h a={1} k={92} b={36} /><Corner /></ViewBar>
          </Side>
          <Docs>
            <DocTabs>
              {docs.map(([t, n, w]) => <DocTab key={t} $w={w}><Icon n={n} s={9} />{t}</DocTab>)}
              <DocTab $on $w={69}><Icon n="section" s={9} />Section 3<Grow /><Icon n="cross" s={8} /></DocTab>
              <Grow />
              <IconButton aria-label="Tab list"><Icon n="listMenu" s={5} /></IconButton>
            </DocTabs>
            <Canvas>
              <Sheet>
                <SectionView />
                <NavBar>
                  <NavDot />
                  <NavButton aria-label="Steering wheel"><Icon n="wheel" s={13} /><Icon n="caret" s={3} /></NavButton>
                  <NavRule />
                  <NavButton aria-label="Zoom"><Icon n="zoomArea" s={10} /><Icon n="caret" s={3} /></NavButton>
                  <NavDot />
                </NavBar>
              </Sheet>
              <Scroll a={282} k={9} b={281} />
            </Canvas>
            <ViewBar>
              <ViewTools>
                <Scale>3/8" = 1'-0"</Scale>
                {["scaleBox", "visual", "sun", "shadow", "crop", "crop2", "glasses", "bulb", "cam", "pad", "constraint"].map((n) => <ViewTool key={n} aria-label={n}><Icon n={n} s={9} /></ViewTool>)}
              </ViewTools>
              <Scroll h a={383} k={9} b={379} />
              <Corner />
            </ViewBar>
          </Docs>
        </Body>
        <Status>
          <StatusText $w={570}>Views : Section : Section 3</StatusText>
          <StatusItem $w={16}><Icon n="worker" s={10} /></StatusItem>
          <SelectBox $w={110} $bg="#fff" $fg="#777"><Select aria-label="Workset"><option> </option></Select><Icon n="chevron" s={6} /></SelectBox>
          <StatusItem $w={30}><Icon n="pencil" s={8} /> :0</StatusItem>
          <StatusItem $w={29} $gap={4}><Icon n="design" s={9} /><Icon n="design2" s={9} /></StatusItem>
          <SelectBox $w={110} $bg="#fff" $fg="#777"><Select aria-label="Design option"><option>Main Model</option></Select><Icon n="chevron" s={6} /></SelectBox>
          <Grow />
          {["selYellow", "selBlue", "selRed", "selFace", "selDrag", "ring"].map((n, i) => <StatusItem key={i} $w={14}><Icon n={n} s={8} /></StatusItem>)}
          <StatusItem $w={18}><Icon n="filter" s={8} />:0</StatusItem>
        </Status>
      </Window>
      <Camera>Professor L</Camera>
      <Clock>2023-02-28&nbsp; 22:05:03</Clock>
    </Screen>
  );
}
